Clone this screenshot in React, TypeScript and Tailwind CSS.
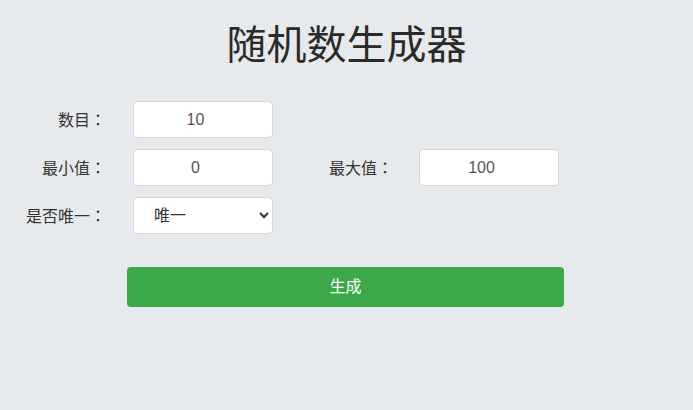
import { useState } from 'react';

const FONT = "font-['Liberation_Sans','Noto_Sans_CJK_SC',sans-serif]";

function Field({ value, onChange }: { value: string; onChange: (v: string) => void }) {
  return (
    <input
      value={value}
      onChange={(e) => onChange(e.target.value)}
      className="w-[140px] h-[37px] rounded-[4px] border border-[#d4d7db] bg-white pr-[15px] text-center text-[16px] text-[#555] outline-none"
    />
  );
}

// full-width colon from the JP face so it sits centred like the original
function Label({ text, className = '' }: { text: string; className?: string }) {
  return (
    <label className={`w-[86px] shrink-0 text-right text-[16px] text-[#333] whitespace-nowrap ${className}`}>
      {text}
      <span className="font-['Noto_Sans_CJK_JP',sans-serif]">：</span>
    </label>
  );
}

export default function App() {
  const [count, setCount] = useState('10');
  const [min, setMin] = useState('0');
  const [max, setMax] = useState('100');
  const [unique, setUnique] = useState('唯一');

  return (
    <div className={`min-h-[410px] w-full bg-[#e7eaed] ${FONT}`}>
      <h1 className="pt-[21px] text-center text-[40px] leading-[48px] text-[#2a2a2a]">随机数生成器</h1>

      <div className="mt-[32px] pl-5 flex flex-col gap-[11px]">
        <div className="flex items-center">
          <Label text="数目" className="mr-[27px]" />
          <Field value={count} onChange={setCount} />
        </div>
        <div className="flex items-center">
          <Label text="最小值" className="mr-[27px]" />
          <Field value={min} onChange={setMin} />
          <Label text="最大值" className="ml-[34px] mr-[26px]" />
          <Field value={max} onChange={setMax} />
        </div>
        <div className="flex items-center">
          <Label text="是否唯一" className="mr-[27px]" />
          <select
            value={unique}
            onChange={(e) => setUnique(e.target.value)}
            className="w-[140px] h-[37px] rounded-[4px] border border-[#d4d7db] bg-white pl-4 pr-1 text-[16px] text-[#333] outline-none"
          >
            <option>唯一</option>
            <option>不唯一</option>
          </select>
        </div>
      </div>

      <div className="mt-[33px] pl-[127px]">
        <button className="w-[437px] h-[40px] rounded-[4px] bg-[#3da84a] text-[16px] text-white">生成</button>
      </div>
    </div>
  );
}
